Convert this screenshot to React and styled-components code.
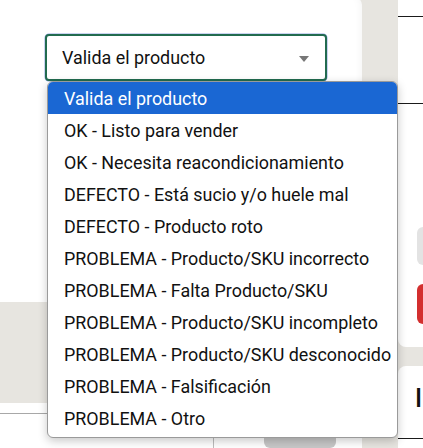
import React from "react";
import styled, { createGlobalStyle } from "styled-components";

const Global = createGlobalStyle`
  html, body { margin: 0; padding: 0; background: #e7e5e0; }
  body {
    font-family: Roboto, "Liberation Sans", sans-serif;
    overflow: hidden;
  }
`;

const Page = styled.div`
  position: relative;
  width: 423px;
  height: 448px;
  overflow: hidden;
  background: #e7e5e0;
  display: grid;
  grid-template-columns: 362px 25px;
  column-gap: 36px;
  align-items: start;
`;

const LeftCol = styled.div`
  display: flex;
  flex-direction: column;
`;

const FormCard = styled.div`
  background: #fff;
  height: 305px;
  margin-top: -3px;
  border-top-right-radius: 8px;
  padding: 37px 0 0 45px;
  box-sizing: border-box;
  box-shadow: inset -6px 0 8px -6px rgba(0, 0, 0, 0.06);
`;

const SelectBox = styled.div`
  width: 282px;
  height: 47px;
  box-sizing: border-box;
  border: 2px solid #226b4f;
  border-radius: 4px;
  background: #fff;
  display: flex;
  align-items: center;
  justify-content: space-between;
  padding: 0 16px 0 15px;
  font-size: 17.9px;
  color: #111;
  box-shadow: 0 0 0 0.5px rgba(40, 80, 200, 0.5);
`;

const Caret = styled.span`
  width: 0;
  height: 0;
  border-left: 5.5px solid transparent;
  border-right: 5.5px solid transparent;
  border-top: 6px solid #777;
  margin-top: 2px;
`;

const TableCard = styled.div`
  margin-top: 101px;
  background: #fff;
  height: 45px;
  display: flex;
  flex-direction: column;
`;

const TableHead = styled.div`
  height: 19px;
  border-bottom: 1px solid #a8a8a8;
`;

const TableBody = styled.div`
  flex: 1;
  display: grid;
  grid-template-columns: 213px 1fr;
`;

const Cell = styled.div`
  border-left: ${(p) => (p.$divider ? "1px solid #bdbdbd" : "none")};
  padding: 14px 0 0 50px;
  box-sizing: border-box;
`;

const GreyButton = styled.div`
  width: 72px;
  height: 20px;
  background: #c8c8c8;
  border-radius: 6px;
`;

const RightCol = styled.div`
  display: flex;
  flex-direction: column;
`;

const SideCard = styled.div`
  background: #fff;
  height: 347px;
  border-bottom-left-radius: 8px;
  display: flex;
  flex-direction: column;
`;

const Rule = styled.div`
  height: 1px;
  background: #1a1a1a;
  margin-top: ${(p) => p.$top}px;
`;

const Chip = styled.div`
  margin-left: 19px;
  width: 30px;
  height: ${(p) => p.$h}px;
  margin-top: ${(p) => p.$top}px;
  border-radius: 6px;
  background: ${(p) => p.$color};
`;

const SideCard2 = styled.div`
  margin-top: 19px;
  background: #fff;
  height: 90px;
  border-top-left-radius: 8px;
  display: flex;
  flex-direction: column;
`;

const BigLetter = styled.div`
  margin: 19px 0 0 17px;
  font-size: 25px;
  line-height: 28px;
  font-weight: 500;
  color: #111;
`;

const Dropdown = styled.ul`
  position: absolute;
  left: 47px;
  top: 81px;
  width: 351px;
  height: 357px;
  box-sizing: border-box;
  margin: 0;
  padding: 0;
  list-style: none;
  background: #fff;
  border: 1px solid #9a9a9a;
  border-radius: 6px;
  overflow: hidden;
  box-shadow: 0 3px 10px rgba(0, 0, 0, 0.22);
`;

const Option = styled.li`
  height: 32px;
  display: flex;
  align-items: center;
  padding-left: 16px;
  font-size: 17.9px;
  color: ${(p) => (p.$active ? "#fff" : "#111")};
  background: ${(p) => (p.$active ? "#1a67d3" : "transparent")};
  white-space: nowrap;
`;

const options = [
  "Valida el producto",
  "OK - Listo para vender",
  "OK - Necesita reacondicionamiento",
  "DEFECTO - Está sucio y/o huele mal",
  "DEFECTO - Producto roto",
  "PROBLEMA - Producto/SKU incorrecto",
  "PROBLEMA - Falta Producto/SKU",
  "PROBLEMA - Producto/SKU incompleto",
  "PROBLEMA - Producto/SKU desconocido",
  "PROBLEMA - Falsificación",
  "PROBLEMA - Otro",
];

export default function App() {
  return (
    <>
      <Global />
      <Page>
        <LeftCol>
          <FormCard>
            <SelectBox>
              <span>Valida el producto</span>
              <Caret />
            </SelectBox>
          </FormCard>
          <TableCard>
            <TableHead />
            <TableBody>
              <Cell />
              <Cell $divider>
                <GreyButton />
              </Cell>
            </TableBody>
          </TableCard>
        </LeftCol>
        <RightCol>
          <SideCard>
            <Rule $top={16} />
            <Rule $top={86} />
            <Chip $top={123} $h={38} $color="#e3e3e3" />
            <Chip $top={19} $h={40} $color="#d32f2f" />
          </SideCard>
          <SideCard2>
            <BigLetter>I</BigLetter>
            <Rule $top={25} />
          </SideCard2>
        </RightCol>
        <Dropdown>
          {options.map((o, i) => (
            <Option key={o} $active={i === 0}>
              {o}
            </Option>
          ))}
        </Dropdown>
      </Page>
    </>
  );
}
